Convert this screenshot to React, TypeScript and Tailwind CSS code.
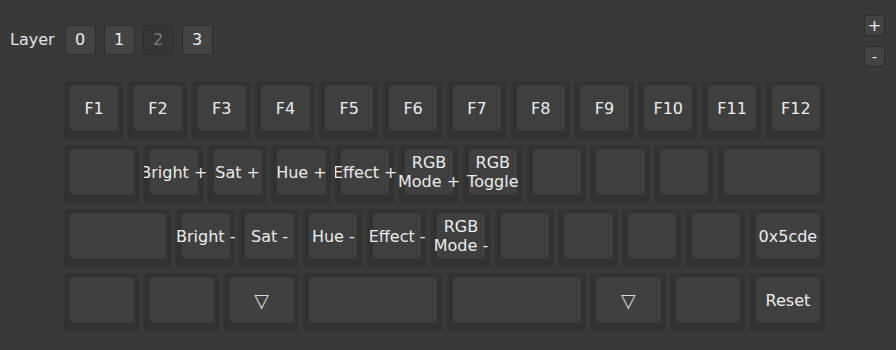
type KeyDef = { label?: string; w?: 1 | 1.25 | 1.75 | 2.25 };

// each cell is one pitch wide and carries the gap on its right; text is clipped to it
const widthClass: Record<number, string> = {
  1: "w-[63.8px]",
  1.25: "w-[79.75px]",
  1.75: "w-[111.65px]",
  2.25: "w-[143.55px]",
};

const rows: KeyDef[][] = [
  ["F1", "F2", "F3", "F4", "F5", "F6", "F7", "F8", "F9", "F10", "F11", "F12"].map((label) => ({ label })),
  [
    { w: 1.25 },
    { label: "Bright +" },
    { label: "Sat +" },
    { label: "Hue +" },
    { label: "Effect +" },
    { label: "RGB\nMode +" },
    { label: "RGB\nToggle" },
    {},
    {},
    {},
    { w: 1.75 },
  ],
  [
    { w: 1.75 },
    { label: "Bright -" },
    { label: "Sat -" },
    { label: "Hue -" },
    { label: "Effect -" },
    { label: "RGB\nMode -" },
    {},
    {},
    {},
    {},
    { label: "0x5cde", w: 1.25 },
  ],
  [
    { w: 1.25 },
    { w: 1.25 },
    { label: "▽", w: 1.25 },
    { w: 2.25 },
    { w: 2.25 },
    { label: "▽", w: 1.25 },
    { w: 1.25 },
    { label: "Reset", w: 1.25 },
  ],
];

function Key({ label, w = 1 }: KeyDef) {
  const tri = label === "▽";
  return (
    <div className={`${widthClass[w]} relative h-[59px] shrink-0 overflow-hidden pr-[4.6px]`}>
      <div className="h-full w-full rounded-[5px] bg-[#323232] pt-[4px] pl-[6px] pr-[5px] pb-[9px]">
        <div className="h-full w-full rounded-[4px] bg-[#3f3f3f]" />
      </div>
      {label ? (
        <div className="absolute inset-y-0 left-[6px] flex w-[calc(100%-15.6px)] items-center justify-center pt-[4px] pb-[9px]">
          <span
            className={`whitespace-pre text-center leading-[19px] ${
              tri ? "text-[19px] text-[#d8d8d8]" : "text-[16px] text-[#ececec]"
            }`}
          >
            {label}
          </span>
        </div>
      ) : null}
    </div>
  );
}

function LayerButton({ n, active }: { n: number; active?: boolean }) {
  return (
    <button
      className={`flex h-[30px] w-[31px] items-center justify-center rounded-[3px] border border-[#2c2c2c] text-[16px] ${
        active ? "bg-[#353535] text-[#7c7c7c]" : "bg-[#434343] text-[#ececec]"
      }`}
    >
      {n}
    </button>
  );
}

export default function App() {
  return (
    <div className="h-[350px] w-[896px] overflow-hidden bg-[#393939] pt-[15px] font-['DejaVu_Sans',sans-serif]">
      <div className="flex h-[66px] items-start justify-between">
        <div className="mt-[10px] flex items-center pl-[10px]">
          <span className="mr-[10px] text-[16px] text-[#e4e4e4]">Layer</span>
          <div className="flex gap-[8px]">
            {[0, 1, 2, 3].map((n) => (
              <LayerButton key={n} n={n} active={n === 2} />
            ))}
          </div>
        </div>
        <div className="flex flex-col gap-[10px] pr-[11px]">
          <button className="flex h-[21px] w-[21px] items-center justify-center rounded-[3px] border border-[#2c2c2c] bg-[#434343] text-[16px] leading-none text-[#ececec]">
            +
          </button>
          <button className="flex h-[21px] w-[21px] items-center justify-center rounded-[3px] border border-[#2c2c2c] bg-[#434343] text-[14px] leading-none text-[#ececec]">
            -
          </button>
        </div>
      </div>
      <div className="ml-[64px] flex flex-col gap-[5px]">
        {rows.map((row, i) => (
          <div key={i} className="flex">
            {row.map((k, j) => (
              <Key key={j} {...k} />
            ))}
          </div>
        ))}
      </div>
    </div>
  );
}
